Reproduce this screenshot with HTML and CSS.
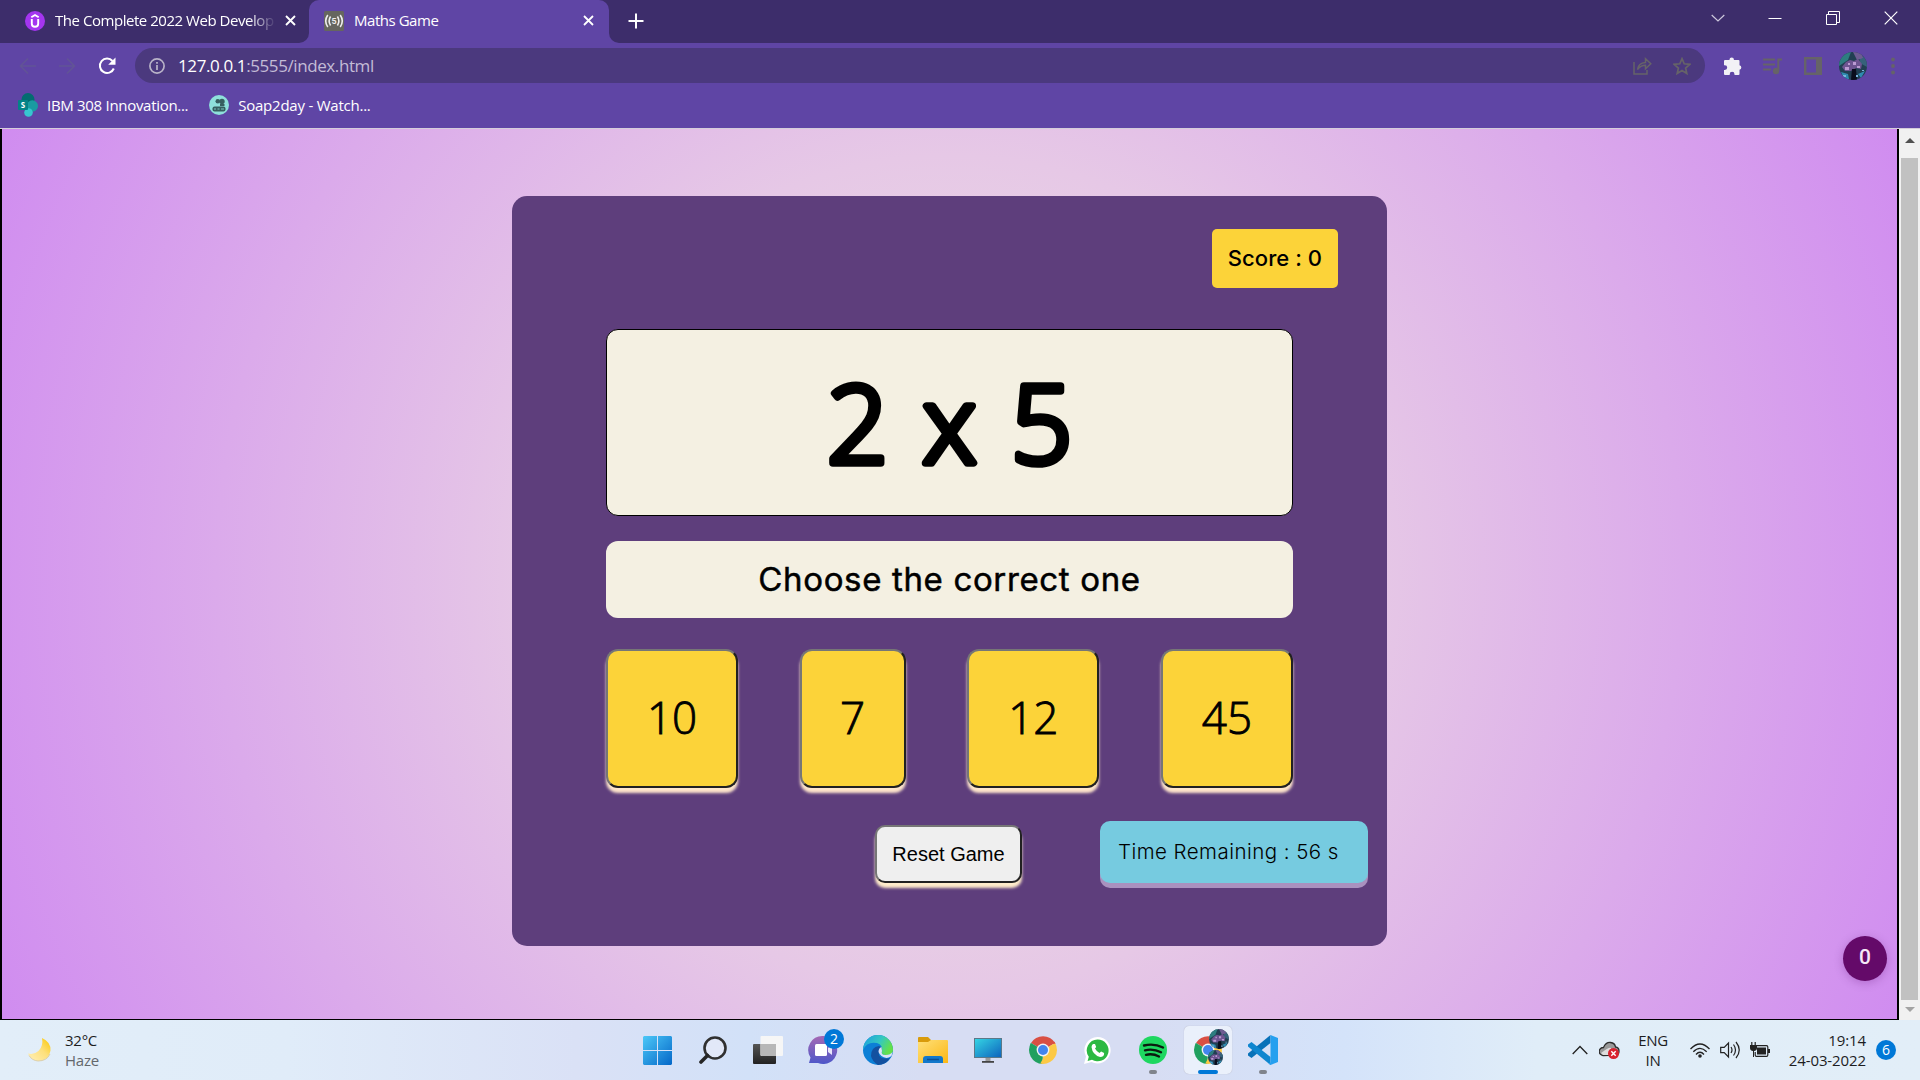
FILE: index.html
```
<!DOCTYPE html>
<html lang="en">
<head>
<meta charset="utf-8">
<title>Maths Game</title>
<link rel="stylesheet" href="styles.css">
</head>
<body>
<svg width="0" height="0" class="defs" aria-hidden="true">
  <defs>
    <linearGradient id="win" x1="0" y1="0" x2="1" y2="1"><stop offset="0" stop-color="#4cc8f8"/><stop offset="1" stop-color="#0467c8"/></linearGradient>
    <linearGradient id="dark" x1="0" y1="0" x2="0" y2="1"><stop offset="0" stop-color="#555"/><stop offset="1" stop-color="#222"/></linearGradient>
    <linearGradient id="teams" x1="0" y1="0" x2="0" y2="1"><stop offset="0" stop-color="#a568b4"/><stop offset="1" stop-color="#4d57c9"/></linearGradient>
    <linearGradient id="edgeTop" x1="0" y1="0" x2="1" y2=".4"><stop offset="0" stop-color="#1b9de2"/><stop offset=".6" stop-color="#35c8c0"/><stop offset="1" stop-color="#62e04c"/></linearGradient>
    <linearGradient id="folder" x1="0" y1="0" x2="1" y2="1"><stop offset="0" stop-color="#ffe07a"/><stop offset="1" stop-color="#fbb714"/></linearGradient>
    <linearGradient id="screen" x1="0" y1="0" x2="1" y2="1"><stop offset="0" stop-color="#35d6e4"/><stop offset="1" stop-color="#0d62bd"/></linearGradient>
    <linearGradient id="moon" x1="1" y1="0" x2="0" y2="1"><stop offset="0" stop-color="#fbc700"/><stop offset=".45" stop-color="#fde07c"/><stop offset="1" stop-color="#fff0b8"/></linearGradient>
    <symbol id="avatar" viewBox="0 0 28 28">
      <clipPath id="avc"><circle cx="14" cy="14" r="14"/></clipPath>
      <g clip-path="url(#avc)">
        <rect width="28" height="28" fill="#213f52"/>
        <path d="M0 0h12l-3 8-9 6z" fill="#2d7d80"/><path d="M20 3l8 3v9l-7-4z" fill="#36627a"/>
        <path d="M14 0h8l2 6-6 2z" fill="#6d5c92"/>
        <path d="M3 15l4-5 4-2 4 1 4-2 4 5-1 5-5-1-5 3-6 0z" fill="#6d5490"/>
        <path d="M6 15h4v3H6zM14 10h3v3h-3zM18 14h3v2h-3zM9 11h2v2H9z" fill="#ba9ad2"/>
        <path d="M13 17h4l1 11h-6z" fill="#0a0d1c"/><path d="M2 20l7 2 1 5H5zM19 22l7-3-4 7z" fill="#2f8bb0"/>
        <path d="M17 23h2v2h-2zM4 23h3v2H4zM23 18h2v1h-2z" fill="#77b5dc"/>
      </g>
    </symbol>
    <symbol id="chrome" viewBox="0 0 28 28">
      <path d="M14 14L2 7a14 14 0 0 1 24.1 0z" fill="#d94f43"/>
      <path d="M14 14l12.1-7a14 14 0 0 1-12.1 21z" fill="#fcc945"/>
      <path d="M14 14l-.5 14A14 14 0 0 1 1.9 7z" fill="#20a05f"/>
      <path d="M14 7.7h12.5l-1-2H12z" fill="#d94f43"/><path d="M19.6 17l-5.8 11-2.5-.5 5-9z" fill="#fcc945"/><path d="M8.4 17.3L1.9 7 1 10l4 10z" fill="#20a05f"/>
      <circle cx="14" cy="14" r="6.4" fill="#f2f3f5"/><circle cx="14" cy="14" r="5" fill="#4285ee"/>
    </symbol>
  </defs>
</svg>

<header class="browser">
  <div class="tabstrip">
    <div class="tab tab-idle">
      <svg width="20" height="20" viewBox="0 0 20 20"><circle cx="10" cy="10" r="10" fill="#a435f0"/><path d="M6.300 6.200L10 4l3.700 2.200M6.800 8v4.700q0 3 3.200 3t3.200-3V8" fill="none" stroke="#fff" stroke-width="1.900"/></svg>
      <span class="tab-title fade">The Complete 2022 Web Develop</span>
      <svg class="close" width="11" height="11" viewBox="0 0 11 11"><path d="M1 1l9 9M10 1l-9 9" stroke="#fff" stroke-width="1.900"/></svg>
    </div>
    <div class="tab tab-active">
      <svg width="20" height="20" viewBox="0 0 20 20"><rect width="20" height="20" rx="1.500" fill="#66665f"/><g fill="none" stroke="#eee" stroke-width="1.600"><path d="M3.800 4Q-.4 10 3.800 16M6.600 5.500q-3 4.500 0 9M16.200 4q4.200 6 0 12M13.400 5.500q3 4.500 0 9"/></g><text x="10" y="13" text-anchor="middle" class="fav-five">5</text></svg>
      <span class="tab-title">Maths Game</span>
      <svg class="close" width="11" height="11" viewBox="0 0 11 11"><path d="M1 1l9 9M10 1l-9 9" stroke="#fff" stroke-width="1.800"/></svg>
    </div>
    <svg class="plus" width="16" height="16" viewBox="0 0 16 16"><path d="M8 .5v15M.5 8h15" stroke="#fff" stroke-width="2"/></svg>
    <div class="window-controls">
      <svg width="14" height="14" viewBox="0 0 14 14"><path d="M.7 4l6.300 6 6.300-6" fill="none" stroke="#cdc8dc" stroke-width="1.200"/></svg>
      <svg width="14" height="14" viewBox="0 0 14 14"><path d="M.5 7.500h13" stroke="#fff"/></svg>
      <svg width="14" height="14" viewBox="0 0 14 14"><path d="M.5 3.500h10v10H.5zM2.500 3V.5h11v11H11" fill="none" stroke="#fff"/></svg>
      <svg width="14" height="14" viewBox="0 0 14 14"><path d="M.7.7l12.600 12.600M13.300.7L.7 13.300" stroke="#fff" stroke-width="1.200"/></svg>
    </div>
  </div>

  <div class="toolbar">
    <div class="nav">
      <svg width="18" height="18" viewBox="0 0 18 18"><path d="M17 9H2M9 1.500L1.500 9 9 16.500" fill="none" stroke="#625496" stroke-width="1.600"/></svg>
      <svg width="18" height="18" viewBox="0 0 18 18"><path d="M1 9h15M9 1.500L16.500 9 9 16.500" fill="none" stroke="#625496" stroke-width="1.600"/></svg>
      <svg width="18" height="18" viewBox="0 0 18 18"><path d="M15.800 11.500A7.200 7.200 0 1 1 14.500 4" fill="none" stroke="#fff" stroke-width="2"/><path d="M17.500.5v7.300h-7.300z" fill="#fff"/></svg>
    </div>
    <div class="omnibox">
      <svg width="16" height="16" viewBox="0 0 16 16"><circle cx="8" cy="8" r="7.100" fill="none" stroke="#b9b3c8" stroke-width="1.700"/><path d="M8 7v5M8 4v1.800" stroke="#b9b3c8" stroke-width="1.700"/></svg>
      <span class="url"><b>127.0.0.1</b>:5555/index.html</span>
      <svg class="share" width="19" height="18" viewBox="0 0 19 18"><path d="M1 5v12h13v-4M4.500 12.500q.8-6.500 8-7V1.700l5.300 5-5.300 5V8.300q-5 0-8 4.200z" fill="none" stroke="#666368" stroke-width="1.500"/></svg>
      <svg width="18" height="18" viewBox="0 0 18 18"><path d="M9 1.700l2.200 5.100 5.600.5-4.200 3.700 1.200 5.500L9 13.600l-4.800 2.900L5.400 11 1.200 7.300l5.600-.5z" fill="none" stroke="#666368" stroke-width="1.700"/></svg>
    </div>
    <div class="actions">
      <svg width="18" height="18" viewBox="0 0 18 18"><path d="M5.500 3V2.600a2.200 2.200 0 0 1 4.400 0V3h4.600q1 0 1 1v4.300a2.300 2.300 0 0 1 0 4.500V17q0 1-1 1h-4v-.8a2.400 2.400 0 0 0-4.800 0v.8H1q-1 0-1-1v-4h.8a2.400 2.400 0 0 0 0-4.800H0V4q0-1 1-1z" fill="#f2f1f6"/></svg>
      <svg width="20" height="18" viewBox="0 0 20 18"><path d="M0 2.500h12M0 7.500h12M0 12.500h8M15.300 14V2.500H19" fill="none" stroke="#666368" stroke-width="2"/><circle cx="13" cy="14" r="3.200" fill="#666368"/></svg>
      <svg width="18" height="18" viewBox="0 0 18 18"><path d="M1.200 1.200h15.600v15.600H1.200z" fill="none" stroke="#666368" stroke-width="2.400"/><path d="M12 1h5v16h-5z" fill="#666368"/></svg>
      <svg class="profile" width="28" height="28"><use href="#avatar"/></svg>
      <svg width="4" height="18" viewBox="0 0 4 18" fill="#666368"><circle cx="2" cy="2.500" r="1.900"/><circle cx="2" cy="9" r="1.900"/><circle cx="2" cy="15.500" r="1.900"/></svg>
    </div>
  </div>

  <div class="bookmarks">
    <a class="bookmark"><svg width="20" height="24" viewBox="0 0 20 24"><circle cx="10" cy="6.500" r="6.500" fill="#036c70"/><circle cx="14.300" cy="13" r="5.700" fill="#1a9ba1"/><circle cx="10.500" cy="19.500" r="4.300" fill="#37c6d0"/><rect x="0" y="7" width="10" height="10" rx="1" fill="#038387"/><text x="5" y="15" text-anchor="middle" class="sp">S</text></svg><span>IBM 308 Innovation...</span></a>
    <a class="bookmark"><svg width="20" height="20" viewBox="0 0 20 20"><circle cx="10" cy="10" r="10" fill="#8ee0db"/><g fill="#365f60"><circle cx="8.800" cy="6.200" r="2.300"/><circle cx="13" cy="6.500" r="2.700"/><rect x="3.500" y="11.500" width="13" height="5" rx="2"/><path d="M11 9h4.500v2h-4.500z"/></g><path d="M5 14h2M8.500 14h2M12 14h3" stroke="#8ee0db" stroke-width=".8"/></svg><span class="bm2">Soap2day - Watch...</span></a>
  </div>
</header>

<div class="viewport">
  <main class="page">
    <section class="game">
      <div class="score"><span>Score : 0</span></div>
      <div class="question">
        <svg width="400" height="180" viewBox="0 0 400 180"><text class="sum" y="129.500"><tspan x="77">2</tspan><tspan x="173">x</tspan><tspan x="261">5</tspan></text></svg>
      </div>
      <div class="instruction"><span>Choose the correct one</span></div>
      <div class="choices">
        <button>10</button><button class="narrow">7</button><button>12</button><button>45</button>
      </div>
      <div class="controls">
        <button class="reset">Reset Game</button>
        <div class="timer"><span>Time Remaining : 56 s</span></div>
      </div>
    </section>
    <div class="counter">0</div>
  </main>
  <div class="scrollbar"><i class="arrow up"></i><i class="thumb"></i><i class="arrow down"></i></div>
</div>

<footer class="taskbar">
  <div class="weather">
    <svg width="26" height="26" viewBox="0 0 26 26"><path d="M15 1q9 4 8.500 12.500Q22 24 11 24 4 23.500 1 16.500q6 1.500 10.500-2.500 5-5 3.500-13z" fill="url(#moon)"/><path d="M2 18.500q3 5 9 5.500 9 0 12-7" fill="none" stroke="#d6c8a5" stroke-width=".8"/></svg>
    <p><span>32°C</span><span class="muted">Haze</span></p>
  </div>
  <nav class="apps">
    <span class="app"><svg width="29" height="29" viewBox="0 0 29 29"><path d="M1 0h13v14H0V1zM15 0h13l1 1v13H15zM0 15h14v14H1l-1-1zM15 15h14v13l-1 1H15z" fill="url(#win)"/></svg></span>
    <span class="app"><svg width="28" height="28" viewBox="0 0 28 28"><circle cx="16" cy="12" r="10.500" fill="#e2e8f8" stroke="#303030" stroke-width="2.600"/><path d="M8.500 19.500L2 26" stroke="#252525" stroke-width="3.600" stroke-linecap="round"/></svg></span>
    <span class="app"><svg width="30" height="28" viewBox="0 0 30 28"><rect y="8" width="23" height="20" rx="1" fill="url(#dark)"/><rect x="7.500" width="22.500" height="20" rx="1" fill="#f6f6f6"/><path d="M7.500 8H23v12H8.500l-1-1z" fill="#b7b7b7"/></svg></span>
    <span class="app"><svg width="30" height="30" viewBox="0 0 30 30"><path d="M15 1a14 14 0 1 1-5 27H1l1.500-5.500A14 14 0 0 1 15 1z" fill="url(#teams)"/><rect x="7" y="9" width="12" height="12" rx="1.500" fill="#fff"/><path d="M20 13l4-3v10l-4-3z" fill="#e9e7fa"/></svg><em class="note">2</em></span>
    <span class="app"><svg width="30" height="30" viewBox="0 0 30 30"><circle cx="15" cy="15" r="15" fill="#0c7fd6"/><path d="M0 15A15 15 0 0 1 30 15q0 5-7 5-6 0-4-4 1-6-5-8Q4 6 0 15z" fill="url(#edgeTop)"/><path d="M27 23q-4 7-12 7-6-4-7-9 0-9 8-10 3 1 3 4-4 1-3 5 2 5 11 3z" fill="#1351a0"/><path d="M18.500 12q-3 1-3 5 2 5 8 6 2 0 5-2l1-4q-2 3-7 3-5 0-3.500-4z" fill="#dbe3f8"/></svg></span>
    <span class="app"><svg width="30" height="26" viewBox="0 0 30 26"><path d="M0 1q0-1 1-1h9l3 3h16v8H0z" fill="#d99b0b"/><path d="M0 5h10l3-2h16q1 0 1 1v22H0z" fill="url(#folder)"/><path d="M5 26v-4q0-3 3-3h14q3 0 3 3v4z" fill="#1278cb"/><path d="M9 22.500h12" stroke="#0b4f94" stroke-width="1.500"/></svg></span>
    <span class="app"><svg width="28" height="25" viewBox="0 0 28 25"><rect x=".5" y=".5" width="27" height="19" fill="url(#screen)" stroke="#5c7888"/><path d="M11.500 20h5v3h-5z" fill="#999"/><path d="M8 23h12v1.800H8z" fill="#444"/></svg></span>
    <span class="app"><svg width="28" height="28"><use href="#chrome"/></svg></span>
    <span class="app"><svg width="27" height="27" viewBox="0 0 27 27"><path d="M13.500 0a13.200 13.200 0 1 1-6 25L0 27l2-7.500A13.200 13.200 0 0 1 13.500 0z" fill="#fff"/><path d="M13.500 2.500a10.900 10.900 0 1 1-5.500 20.200L3.600 24l1.200-4.300A10.900 10.900 0 0 1 13.500 2.500z" fill="#2cb942"/><path d="M9 7l2 0 1.200 3-1.200 1.500q1.500 3 4.500 4.500l1.600-1.600 3 1.500q.3 4-4 4Q8.500 18 7.500 10q.2-2 1.500-3z" fill="#fff"/></svg></span>
    <span class="app running"><svg width="28" height="28" viewBox="0 0 28 28"><circle cx="14" cy="14" r="14" fill="#1ed760"/><path d="M5 9.500q10-2.500 19 2M6 14.300q8.500-2 16 2M7 18.800q7-1.500 13 1.700" fill="none" stroke="#0b1a0f" stroke-width="2.400" stroke-linecap="round"/></svg></span>
    <span class="app current"><svg width="28" height="28"><use href="#chrome"/></svg><svg class="av1" width="20" height="20"><use href="#avatar"/></svg><svg class="av2" width="15" height="15"><use href="#avatar"/></svg></span>
    <span class="app running"><svg width="30" height="30" viewBox="0 0 30 30"><path d="M22.500 0v8L3.500 23 0 20.500v-2z" fill="#0871b8"/><path d="M22.500 30v-8L3.500 7 0 9.500v2z" fill="#0f86cf"/><path d="M22.500 0L30 3v24l-7.500 3-2-1.500 2-1z" fill="#26a0ef"/></svg></span>
  </nav>
  <div class="tray">
    <svg class="t-chev" width="16" height="10" viewBox="0 0 16 10"><path d="M.7 9L8 1.500 15.300 9" fill="none" stroke="#222" stroke-width="1.300"/></svg>
    <svg class="t-cloud" width="21" height="18" viewBox="0 0 21 18"><path d="M4 14.500a4 4 0 0 1 .5-8Q7 1 11.500 1.500q4.500.5 5 4.500 3.500.5 3.500 4 0 4-3 4z" fill="#999" stroke="#2c2c2c" stroke-width="1.300"/><path d="M2 12q8-6 10-5v7H4z" fill="#ddd"/><circle cx="14.500" cy="12.500" r="5.500" fill="#d8232f"/><path d="M12.300 10.300l4.400 4.400M16.700 10.300l-4.400 4.400" stroke="#fff" stroke-width="1.400"/></svg>
    <p class="lang"><span>ENG</span><span>IN</span></p>
    <svg class="t-wifi" width="20" height="15" viewBox="0 0 20 15"><g fill="none" stroke="#222" stroke-width="1.300"><path d="M.5 6Q10-4 19.500 6M3.300 8.800q6.700-7 13.400 0M6 11.500q4-4.500 8 0"/></g><circle cx="10" cy="13" r="1.800" fill="#222"/></svg>
    <svg class="t-vol" width="20" height="18" viewBox="0 0 20 18"><g fill="none" stroke="#222" stroke-width="1.200"><path d="M.7 6.300h3.500L8.500 2v14l-4.300-4.300H.7zM11 6q2 3 0 6M13.500 3.500q4 5.500 0 11M16 1q6.500 8 0 16"/></g></svg>
    <svg class="t-bat" width="20" height="16" viewBox="0 0 20 16"><path d="M6.500 3.600h10q1.300 0 1.300 1.300v8q0 1.500-1.300 1.500h-10q-1.300 0-1.300-1.500V10" fill="none" stroke="#222" stroke-width="1.200"/><path d="M7 9V5.500h9v7H7zM18 7h2v4h-2zM0 3h7v3q0 2.500-3 3v6H3V9Q0 8.500 0 6zM1.200 0h1.200v4H1.200zM4.600 0h1.200v4H4.600z" fill="#222"/></svg>
    <p class="clock"><span>19:14</span><span>24-03-2022</span></p>
    <em class="alerts">6</em>
  </div>
</footer>
</body>
</html>
```
FILE: styles.css
```
* { box-sizing: border-box; }
body { margin: 0; width: 1920px; height: 1080px; overflow: hidden; display: flex; flex-direction: column; font-family: "Open Sans", sans-serif; }
svg { display: block; flex: none; }
p { margin: 0; }
em, i { font-style: normal; }
.defs { position: absolute; }

/* Browser chrome */
.browser { height: 129px; background: #5f45a5; border-bottom: 1px solid #d5cdda; color: #fff; flex: none; }
.tabstrip { position: relative; height: 43px; display: flex; align-items: flex-start; background: linear-gradient(#3d2d6b, #3d2d6b) 0 0 / 100% 30px no-repeat, #5f45a5; }
.tabstrip::after { content: ""; position: absolute; left: 609px; right: 0; top: 0; bottom: 0; background: #3d2d6b; border-bottom-left-radius: 10px; }
.tab { height: 43px; display: flex; align-items: center; font-size: 15px; padding-bottom: 2px; white-space: nowrap; }
.tab-idle { width: 309px; padding-left: 25px; padding-right: 13px; border-bottom-right-radius: 10px; background: #3d2d6b; }
.tab-title { margin-left: 10px; padding-bottom: 1px; letter-spacing: -.46px; flex: 1; overflow: hidden; }
.fade { margin-right: 9px; -webkit-mask-image: linear-gradient(90deg, #000 88%, transparent); mask-image: linear-gradient(90deg, #000 88%, transparent); }
.tab-active { width: 300px; padding-left: 15px; padding-right: 15px; background: #5f45a5; border-radius: 10px 10px 0 0; }
.fav-five { font: 700 8px "Inter", sans-serif; fill: #eee; }
.plus { margin: 13px 0 0 19px; }
.plus, .window-controls { position: relative; z-index: 1; }
.window-controls { margin: 11px 22px 0 auto; display: flex; gap: 44px; }
.window-controls svg:first-child { margin-right: -1px; }
.toolbar { height: 45px; display: flex; align-items: center; }
.nav { width: 135px; padding-left: 19px; display: flex; gap: 21px; }
.nav svg:last-child { margin-left: 1px; }
.omnibox { width: 1570px; height: 35px; border-radius: 18px; background: #4b397e; display: flex; align-items: center; padding: 0 14px; }
.url { margin-left: 13px; padding-bottom: 1px; font-size: 17px; letter-spacing: -.4px; color: #c3bcd6; }
.url b { font-weight: 400; color: #fff; }
.share { margin: 0 21px 0 auto; }
.actions { display: flex; align-items: center; margin-left: 19px; width: 171px; justify-content: space-between; }
.profile { margin: 0 3px 0 -3px; }
.bookmarks { height: 38px; display: flex; padding: 0 0 4px 18px; font-size: 15px; }
.bookmark { display: flex; align-items: center; margin-right: 21px; white-space: nowrap; }
.bookmark span { margin-left: 9px; letter-spacing: -.3px; }
.bookmark .bm2 { letter-spacing: -.23px; }
.sp { font: 700 8px "Open Sans", sans-serif; fill: #fff; }

/* Web page */
.viewport { height: 891px; display: flex; flex: none; }
.page { width: 1899px; border: solid #000; border-width: 0 2px 1px; padding-top: 67px; position: relative; background: radial-gradient(circle, #ede4e0, #e6c8e6 40%, #d08cf0 100%); }
.game { width: 875px; height: 750px; margin: 0 auto; border-radius: 15px; background: #5e3e7c; padding: 33px 94px 0; color: #000; font-family: "Inter", sans-serif; }
.score { width: 126px; height: 59px; margin: 0 -45px 0 auto; padding-bottom: 1px; border-radius: 5px; background: #fcd339; display: flex; align-items: center; justify-content: center; font-size: 22px; font-weight: 500; letter-spacing: .05px; white-space: nowrap; }
.question { height: 187px; margin-top: 41px; border: 1px solid #000; border-radius: 12px; background: #f4f0e2; display: flex; align-items: center; justify-content: center; }
.sum { font: 300 107px "Open Sans", sans-serif; fill: #000; stroke: #000; stroke-width: 7.5px; stroke-linejoin: round; }
.instruction { height: 77px; margin-top: 25px; padding-bottom: 1px; border-radius: 12px; background: #f4f0e2; display: flex; align-items: center; justify-content: center; font-size: 33px; font-weight: 400; letter-spacing: .65px; -webkit-text-stroke: .5px #000; }
.choices { display: flex; justify-content: space-between; margin-top: 31px; }
.choices button { width: 132px; height: 139px; padding: 0 0 4px; border: 2px solid; border-color: #767676 #212121 #212121 #767676; border-radius: 12px; background: #fcd339; box-shadow: 0 5px 3px #ffe6cc; color: #000; font: 300 44px "Open Sans", sans-serif; -webkit-text-stroke: .9px #000; }
.choices .narrow { width: 106px; }
.controls { display: flex; justify-content: flex-end; margin: 33px -75px 0 0; }
.reset { width: 147px; height: 58px; margin: 4px 78px 0 0; border: 2px solid; border-color: #767676 #212121 #212121 #767676; border-radius: 10px; background: #efefef; box-shadow: 0 5px 3px #ffeccb; padding: 0; font: 20px "Liberation Sans", sans-serif; color: #000; }
.timer { width: 268px; height: 62px; border-radius: 10px; background: #76cbe0; box-shadow: 0 5px 0 #a991bf; padding: 0 0 1px 18px; display: flex; align-items: center; font-size: 20.5px; letter-spacing: .45px; font-weight: 300; white-space: nowrap; }
.counter { position: absolute; right: 10px; bottom: 38px; width: 44px; height: 45px; border-radius: 50%; background: #640a69; box-shadow: 0 2px 10px rgba(80,0,100,.25); color: #f5e8f7; font: 500 21px/42px "Roboto", sans-serif; text-align: center; }
.scrollbar { width: 21px; background: #f1f1f1; display: flex; flex-direction: column; align-items: center; }
.thumb { width: 17px; height: 842px; background: #c1c1c1; }
.arrow { border: solid transparent; border-width: 0 5px; }
.up { border-bottom: 5px solid #505050; margin: 9px 0 15px; }
.down { border-top: 5px solid #a3a3a3; margin-top: 7px; }

/* Taskbar */
.taskbar { height: 60px; position: relative; display: flex; align-items: center; color: #1d1d1f; font-size: 15px; line-height: 20px; background: linear-gradient(90deg, #e2eef9 0, #e0ecf9 15%, #dae1f6 30%, #d2e1f8 39%, #d7ddf3 48%, #d7ddf3 60%, #d4e3fa 70%, #e0edf8 80%, #e2eef8 100%); }
.taskbar p span { display: block; }
.weather { width: 630px; padding-left: 27px; display: flex; gap: 12px; align-items: center; }
.weather p { letter-spacing: -.25px; }
.muted { color: #63676c; }
.apps { display: flex; }
.app { position: relative; width: 55px; height: 60px; display: flex; align-items: center; justify-content: center; }
.app > svg { position: relative; }
.running::after, .current::after { content: ""; position: absolute; left: 50%; bottom: 6px; width: 8px; height: 4px; margin-left: -4px; border-radius: 2px; background: #80848c; }
.current::before { content: ""; position: absolute; inset: 6px 3px 6px 4px; border-radius: 5px; background: #eaf0fb; box-shadow: 0 0 1px #aab; }
.current::after { width: 20px; margin-left: -10px; background: #0078d7; }
.app > .av1 { position: absolute; left: 29px; top: 9px; }
.app > .av2 { position: absolute; left: 28px; top: 30px; }
.note { position: absolute; left: 29px; top: 9px; width: 20px; height: 20px; border-radius: 50%; background: #0078d7; color: #fff; font-size: 14px; text-align: center; }
.tray { margin-left: auto; padding-right: 24px; display: flex; align-items: center; }
.lang { width: 40px; margin: 0 17px 0 13px; text-align: center; letter-spacing: -.3px; }
.t-chev { margin-right: 11px; }
.t-vol { margin: 0 10px; }
.clock { width: 96px; text-align: right; letter-spacing: -.1px; white-space: nowrap; }
.alerts { width: 20px; height: 20px; margin-left: 10px; border-radius: 50%; background: #0078d7; color: #fff; font-size: 14px; text-align: center; }
```
